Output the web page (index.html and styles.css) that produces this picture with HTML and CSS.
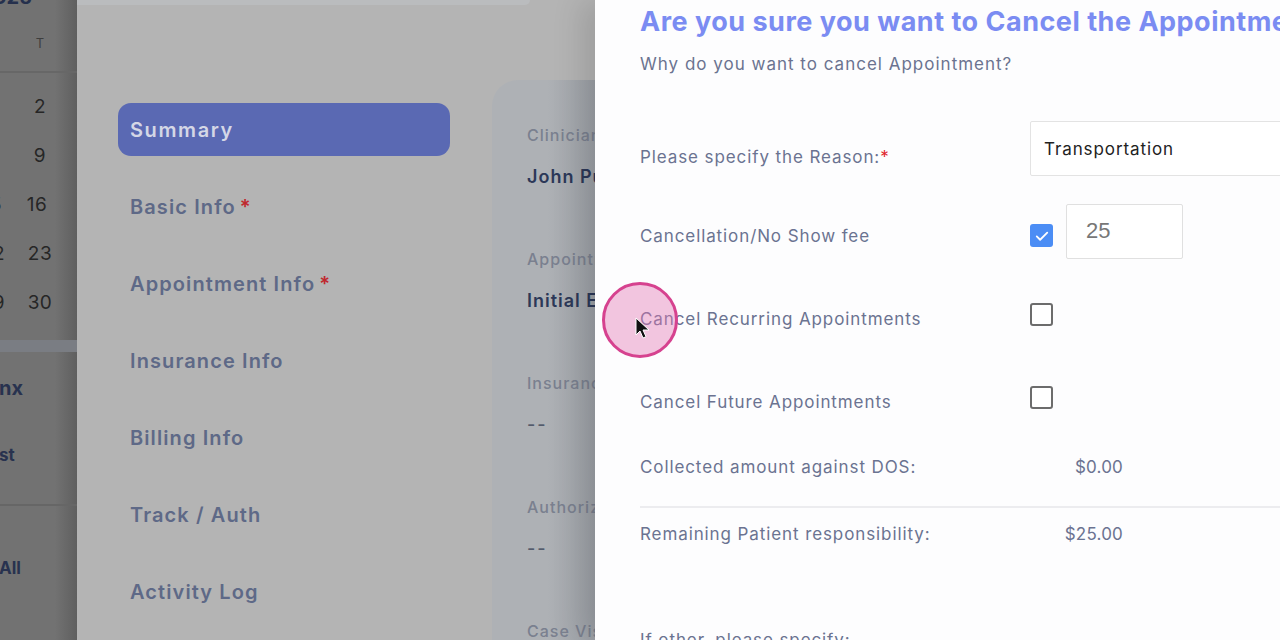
FILE: index.html
```html
<!DOCTYPE html>
<html lang="en">
<head>
<meta charset="utf-8">
<title>Cancel Appointment</title>
<link rel="stylesheet" href="styles.css">
</head>
<body>
<div class="screen">
  <aside class="cal">
    <div class="cal-year"><span class="clip">2025</span></div>
    <div class="cal-head"><span class="c0"></span><span class="c1">T</span></div>
    <div class="cal-weeks">
      <div class="cal-row"><span class="c0"></span><span class="c1">2</span></div>
      <div class="cal-row"><span class="c0"></span><span class="c1">9</span></div>
      <div class="cal-row"><span class="c0 thin"><span class="clip">15</span></span><span class="c1">16</span></div>
      <div class="cal-row"><span class="c0"><span class="clip">22</span></span><span class="c1">23</span></div>
      <div class="cal-row"><span class="c0"><span class="clip">29</span></span><span class="c1">30</span></div>
    </div>
    <div class="cal-band"></div>
    <div class="cal-link big">nx</div>
    <div class="cal-link">st</div>
    <div class="cal-sep"></div>
    <div class="cal-link all">All</div>
  </aside>

  <main class="detail">
    <div class="topbar"></div>
    <div class="detail-body">
      <nav class="menu">
        <div class="menu-item active">Summary</div>
        <div class="menu-item">Basic Info <span class="req">*</span></div>
        <div class="menu-item">Appointment Info <span class="req">*</span></div>
        <div class="menu-item">Insurance Info</div>
        <div class="menu-item">Billing Info</div>
        <div class="menu-item">Track / Auth</div>
        <div class="menu-item">Activity Log</div>
      </nav>
      <section class="card">
        <div class="field"><div class="f-label">Clinician</div><div class="f-value">John Purdy</div></div>
        <div class="field"><div class="f-label">Appointment Type</div><div class="f-value">Initial Eval</div></div>
        <div class="field"><div class="f-label">Insurance</div><div class="f-value dash">--</div></div>
        <div class="field"><div class="f-label">Authorization</div><div class="f-value dash">--</div></div>
        <div class="field"><div class="f-label">Case Visits</div></div>
      </section>
    </div>
  </main>

  <section class="modal">
    <h1 class="m-title">Are you sure you want to Cancel the Appointment?</h1>
    <p class="m-sub">Why do you want to cancel Appointment?</p>
    <div class="form">
      <div class="row">
        <div class="lbl lbl-low">Please specify the Reason:<span class="req">*</span></div>
        <div class="ctl"><div class="select">Transportation</div></div>
      </div>
      <div class="row">
        <div class="lbl">Cancellation/No Show fee</div>
        <div class="ctl">
          <span class="cb checked"><svg viewBox="0 0 24 24" width="18" height="18"><path d="M5 12.5l4.5 4.5L19 7.5" fill="none" stroke="#fff" stroke-width="2.4" stroke-linecap="round" stroke-linejoin="round"/></svg></span>
          <div class="fee">25</div>
        </div>
      </div>
      <div class="row">
        <div class="lbl">Cancel Recurring Appointments</div>
        <div class="ctl"><span class="cb"></span></div>
      </div>
      <div class="row">
        <div class="lbl">Cancel Future Appointments</div>
        <div class="ctl"><span class="cb"></span></div>
      </div>
      <div class="sum-row first">
        <div class="lbl-s">Collected amount against DOS:</div>
        <div class="amt">$0.00</div>
      </div>
      <div class="divider"></div>
      <div class="sum-row">
        <div class="lbl-s">Remaining Patient responsibility:</div>
        <div class="amt">$25.00</div>
      </div>
      <div class="other">If other, please specify:</div>
    </div>
  </section>

  <div class="click-ring"></div>
  <svg class="cursor" viewBox="0 0 14 22" width="14" height="22"><path d="M1 1v17l4-4 3 7 3-1.3-3-6.7h6z" fill="#111" stroke="#fff" stroke-width="1"/></svg>
</div>
</body>
</html>
```
FILE: styles.css
```css
* { box-sizing: border-box; }
html, body { margin: 0; padding: 0; }
body {
  width: 1280px;
  height: 640px;
  overflow: hidden;
  font-family: Inter, "Noto Sans", sans-serif;
  background: #b4b4b4;
}
.screen {
  position: relative;
  display: flex;
  width: 1280px;
  height: 640px;
  overflow: hidden;
}

/* left calendar strip */
.cal {
  width: 77px;
  flex: none;
  overflow: hidden;
  background: linear-gradient(to right, #727272 0, #727272 55px, #5f5f5f 77px);
  color: #262626;
}
.cal-year {
  height: 4px;
  display: flex;
  justify-content: flex-end;
  align-items: flex-end;
  width: 32px;
  overflow: visible;
  font-weight: 700;
  font-size: 20px;
  color: #25304d;
  line-height: 20px;
}
.cal-year .clip { margin-bottom: -3px; }
.cal-head {
  height: 69px;
  display: flex;
  align-items: center;
  padding-top: 10px;
  border-bottom: 2px solid #676767;
  font-size: 13px;
  color: #3e3e3e;
}
.c0 {
  width: 5px;
  flex: none;
  display: flex;
  justify-content: flex-end;
}
.c0.thin { width: 2px; }
.c1 {
  width: 70px;
  text-align: center;
}
.cal-weeks { padding-top: 9px; }
.cal-row {
  height: 49px;
  display: flex;
  align-items: center;
  font-size: 19px;
  letter-spacing: 0.5px;
}
.cal-band {
  margin-top: 13px;
  height: 12px;
  background: #7a7d83;
}
.cal-link {
  height: 67px;
  display: flex;
  align-items: center;
  font-weight: 700;
  font-size: 17px;
  color: #28324f;
  margin-left: -1px;
}
.cal-link.big { margin-top: 3px; height: 66px; font-size: 20px; }
.cal-sep {
  margin-top: 16px;
  height: 2px;
  background: #666;
}
.cal-link.all { margin-top: 47px; height: 30px; }

/* detail panel */
.detail {
  width: 518px;
  flex: none;
  overflow: hidden;
  background: #b4b4b4;
}
.topbar {
  width: 453px;
  height: 5px;
  background: #babcbe;
  border-bottom-right-radius: 6px;
}
.detail-body {
  display: flex;
  align-items: flex-start;
}
.menu {
  margin-top: 98px;
  margin-left: 41px;
  width: 332px;
  flex: none;
  display: flex;
  flex-direction: column;
  gap: 24px;
}
.menu-item {
  height: 53px;
  display: flex;
  align-items: center;
  padding-left: 12px;
  border-radius: 13px;
  font-weight: 600;
  font-size: 20px;
  letter-spacing: 1.1px;
  color: #5e6987;
}
.menu-item .req { color: #c0272d; margin-left: 4px; }
.menu-item.active {
  background: #5a69b3;
  color: #d4d7e6;
  letter-spacing: 1.6px;
}
.card {
  margin-top: 75px;
  margin-left: 42px;
  width: 320px;
  flex: none;
  height: 600px;
  border-top-left-radius: 26px;
  background: linear-gradient(to right, #aeb1b5 0, #aeb1b5 55px, #9da1a7 103px);
  padding: 45px 0 0 35px;
  white-space: nowrap;
  letter-spacing: 1px;
}
.field { height: 124px; }
.f-label {
  line-height: 20px;
  font-size: 16px;
  color: #7a808f;
  font-weight: 500;
}
.f-value {
  margin-top: 21px;
  line-height: 22px;
  font-size: 18px;
  font-weight: 600;
  color: #2c3858;
}
.f-value.dash { color: #535b6c; font-weight: 500; letter-spacing: 2px; }

/* modal */
.modal {
  width: 685px;
  flex: none;
  background: #fdfdfe;
  padding: 5px 0 0 45px;
  box-shadow: -14px 0 28px rgba(0, 0, 0, 0.12);
  white-space: nowrap;
  overflow: hidden;
}
.m-title {
  margin: 0;
  line-height: 34px;
  font-size: 27px;
  font-weight: 700;
  letter-spacing: 0.5px;
  color: #7b8cf2;
}
.m-sub {
  margin: 13px 0 0;
  line-height: 24px;
  font-size: 17px;
  letter-spacing: 1px;
  color: #6b7390;
}
.form { margin-top: 31px; letter-spacing: 0.9px; }
.row {
  display: flex;
  height: 83px;
  align-items: center;
}
.lbl, .lbl-s {
  width: 390px;
  flex: none;
  font-size: 17px;
  color: #6b7391;
  line-height: 24px;
}
.lbl { padding-top: 9px; }
.lbl.lbl-low { padding-top: 17px; }
.req { color: #e0262c; }
.ctl {
  display: flex;
  align-items: center;
}
.select {
  width: 300px;
  height: 55px;
  border: 1px solid #e3e3e3;
  border-radius: 2px;
  display: flex;
  align-items: center;
  padding-left: 13px;
  font-size: 17px;
  color: #222;
  background: #fff;
}
.cb {
  width: 23px;
  height: 23px;
  border: 2px solid #6c6c6c;
  border-radius: 3px;
  background: #fff;
  display: flex;
  align-items: center;
  justify-content: center;
}
.cb.checked {
  border: none;
  background: #4b8df5;
  margin-top: 8px;
}
.fee {
  margin-left: 13px;
  width: 117px;
  height: 55px;
  border: 1px solid #e0e0e0;
  border-radius: 2px;
  display: flex;
  align-items: center;
  padding-left: 19px;
  padding-bottom: 2px;
  font-family: "Liberation Sans", Arial, sans-serif;
  font-size: 22px;
  letter-spacing: 0;
  color: #777;
  background: #fff;
}
.sum-row {
  display: flex;
  height: 52px;
  align-items: center;
}
.sum-row.first { height: 56px; }
.amt {
  width: 93px;
  text-align: right;
  font-size: 17px;
  letter-spacing: 0.2px;
  color: #6b7391;
}
.divider {
  margin-top: 11px;
  height: 2px;
  background: #ececef;
}
.other {
  margin-top: 68px;
  font-size: 17px;
  line-height: 24px;
  color: #6b7391;
}

/* click highlight overlay */
.click-ring {
  position: absolute;
  left: 602px;
  top: 282px;
  width: 76px;
  height: 76px;
  border-radius: 50%;
  border: 3px solid #d6428f;
  background: rgba(226, 120, 180, 0.42);
}
.cursor {
  position: absolute;
  left: 635px;
  top: 317px;
}
```
